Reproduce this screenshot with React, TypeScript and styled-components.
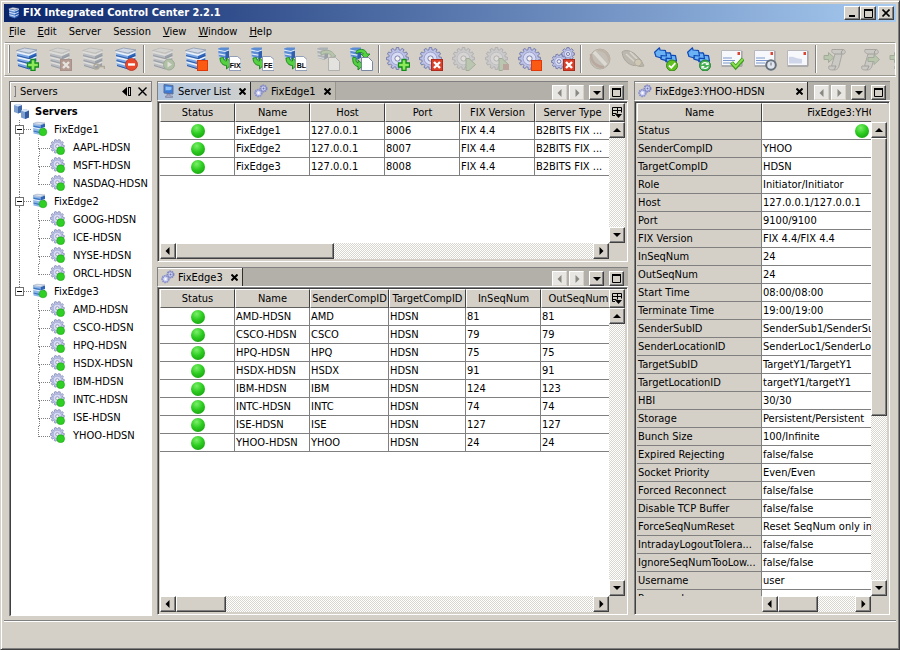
import React from 'react';
import styled, { createGlobalStyle, css } from 'styled-components';

const face = '#d4d0c8';

const GlobalStyle = createGlobalStyle`
  * { box-sizing: border-box; }
  body { margin: 0; background: ${face}; overflow: hidden; }
  body, button, table {
    font-family: "DejaVu Sans Condensed", "DejaVu Sans", sans-serif;
    font-size: 11px;
    color: #000;
  }
  button { padding: 0; margin: 0; border: 0; background: none; }
  svg { display: block; flex: none; }
`;

const raised = css`
  background: ${face};
  border: 1px solid;
  border-color: #fff #404040 #404040 #fff;
  box-shadow: inset -1px -1px #808080;
`;

/* ---------- window ---------- */

const Window = styled.div`
  height: 100vh;
  display: flex;
  flex-direction: column;
  padding: 3px;
  background: ${face};
  border: 1px solid;
  border-color: ${face} #404040 #404040 ${face};
  box-shadow: inset 1px 1px #fff, inset -1px -1px #808080;
`;

const TitleBar = styled.header`
  display: flex;
  align-items: center;
  flex: none;
  height: 18px;
  padding: 0 2px 0 4px;
  background: linear-gradient(to right, #0a246a, #a6caf0);
`;

const Title = styled.h1`
  flex: 1;
  margin: 0 0 0 3px;
  font-size: 11px;
  line-height: 18px;
  font-weight: bold;
  color: #fff;
  white-space: nowrap;
`;

const CaptionButton = styled.button<{ $apart?: boolean }>`
  ${raised}
  display: flex;
  align-items: center;
  justify-content: center;
  width: 16px;
  height: 14px;
  margin-left: ${p => (p.$apart ? 2 : 0)}px;
`;

const MenuBar = styled.nav`
  display: flex;
  flex: none;
  gap: 12px;
  height: 20px;
  padding-left: 5px;
`;

const MenuItem = styled.button`
  line-height: 20px;
`;

const ToolBar = styled.div`
  display: flex;
  align-items: center;
  flex: none;
  height: 34px;
  padding-left: 3px;
  overflow: hidden;
  border: 1px solid #9a978f;
  border-left-color: #fff;
  border-right-color: #fff;
  box-shadow: inset 0 1px #fff, 0 1px #fff;
`;

const Divider = styled.span`
  flex: none;
  width: 2px;
  height: 28px;
  margin: 0 1px;
  border-left: 1px solid #808080;
  border-right: 1px solid #fff;
`;

const Grip = styled.span`
  flex: none;
  width: 2px;
  height: 28px;
  border-left: 1px solid #fff;
  border-right: 1px solid #808080;
`;

const ToolButton = styled.button`
  display: flex;
  flex: none;
  align-items: center;
  justify-content: center;
  width: 33px;
  height: 30px;

  &:disabled svg {
    filter: grayscale(0.65);
    opacity: 0.42;
  }
`;

const Workspace = styled.main`
  display: flex;
  flex: 1;
  gap: 4px;
  min-height: 0;
  padding: 5px 5px 4px;
`;

const StatusBar = styled.footer`
  flex: none;
  height: 26px;
  border-top: 1px solid #808080;
  box-shadow: inset 0 1px #fff;
`;

/* ---------- docked panels ---------- */

const Sidebar = styled.aside`
  display: flex;
  flex-direction: column;
  flex: none;
  width: 143px;
`;

const SidebarHeader = styled.div`
  display: flex;
  align-items: center;
  gap: 7px;
  flex: none;
  height: 20px;
  padding: 0 4px;
  border: 1px solid #808080;
  border-bottom: 0;
  box-shadow: inset 1px 1px #fff;
`;

const SidebarGrip = styled.span`
  width: 2px;
  height: 11px;
  border: 1px solid #808080;
  border-left: 0;
`;

const SidebarTitle = styled.h2`
  flex: 1;
  margin: 0 0 0 -3px;
  font-size: 11px;
  font-weight: normal;
`;

const Center = styled.div`
  display: flex;
  flex-direction: column;
  flex: 473 1 0;
  gap: 4px;
  min-width: 0;
`;

const Panel = styled.section<{ $grow: number }>`
  display: flex;
  flex-direction: column;
  flex: ${p => p.$grow} 1 0;
  min-width: 0;
  min-height: 0;
  padding: 0 1px 1px;
`;

const TabStrip = styled.div`
  display: flex;
  align-items: stretch;
  flex: none;
  height: 20px;
  background: #b2b0a8;
  border-top: 1px solid #808080;
  border-left: 1px solid #808080;
  border-bottom: 1px solid #fff;
`;

const tabTone = {
  focused: 'linear-gradient(to right, #b4c8e0, #d0d0cc)',
  selected: face,
  idle: '#bebbb3',
};

const Tab = styled.div<{ $tone: keyof typeof tabTone; $wide?: boolean }>`
  display: flex;
  align-items: center;
  flex: none;
  width: ${p => (p.$wide ? '173px' : 'auto')};
  padding: 0 4px 0 3px;
  background: ${p => tabTone[p.$tone]};
  border-right: 1px solid ${p => (p.$tone === 'idle' ? '#99968e' : '#303030')};
  box-shadow: inset 0 1px ${p => (p.$tone === 'idle' ? '#bebbb3' : '#fff')};
`;

const TabLabel = styled.button`
  display: flex;
  align-items: center;
  flex: 1;
  gap: 3px;
  height: 18px;
  white-space: nowrap;
`;

const TabClose = styled.button`
  display: flex;
  margin-left: 8px;
  padding: 1px 0 0;
`;

const StripTools = styled.div`
  display: flex;
  align-items: center;
  margin-left: auto;
  padding: 3px 4px 0 0;
`;

const StripButton = styled.button<{ $space: number }>`
  ${raised}
  display: flex;
  align-items: center;
  justify-content: center;
  width: 15px;
  height: 15px;
  margin-left: ${p => p.$space}px;

  &:disabled {
    background: #e8e6e2;
    border-color: #fff #d4d0c8 #d4d0c8 #fff;
    box-shadow: none;
  }
`;

const PanelBody = styled.div`
  display: grid;
  grid-template-columns: minmax(0, 1fr) 16px;
  grid-template-rows: 19px minmax(0, 1fr) 16px;
  flex: 1;
  min-height: 0;
  padding: 1px 2px 2px;
  border: 1px solid;
  border-color: #808080 #fff #fff #808080;
  box-shadow: inset 1px 1px #404040;
`;

const Viewport = styled.div<{ $plain?: boolean }>`
  grid-row: 1 / 3;
  grid-column: 1;
  overflow: hidden;
  background: ${p => (p.$plain ? face : '#fff')};
`;

const Corner = styled.button`
  ${raised}
  display: flex;
  align-items: center;
  justify-content: center;
`;

const CornerGap = styled.span`
  background: ${face};
  border-top: 1px solid #fff;
`;

/* ---------- scroll bars ---------- */

const ScrollTrack = styled.div<{ $vertical?: boolean; $inset?: number }>`
  display: flex;
  flex-direction: ${p => (p.$vertical ? 'column' : 'row')};
  grid-column: ${p => (p.$vertical ? 2 : 1)};
  grid-row: ${p => (p.$vertical ? 2 : 3)};
  margin-left: ${p => p.$inset ?? 0}px;
  background: repeating-conic-gradient(#fff 0 25%, #d9d6cf 0 50%) 0 0 / 2px 2px;
`;

const ScrollButton = styled.button`
  ${raised}
  display: flex;
  align-items: center;
  justify-content: center;
  flex: none;
  width: 16px;
  height: 16px;
`;

const ScrollLane = styled.div<{ $vertical?: boolean }>`
  display: flex;
  flex-direction: ${p => (p.$vertical ? 'column' : 'row')};
  flex: 1;
  min-width: 0;
  min-height: 0;
`;

const ScrollThumb = styled.div<{ $size: number }>`
  ${raised}
  flex: 0 0 ${p => p.$size}%;
`;

/* ---------- tables ---------- */

const Grid = styled.table`
  table-layout: fixed;
  width: 0;
  border-collapse: separate;
  border-spacing: 0;
`;

const HeadCell = styled.th`
  height: 19px;
  padding: 0;
  line-height: 16px;
  font-weight: normal;
  text-align: center;
  white-space: nowrap;
  overflow: hidden;
  background: ${face};
  border: 1px solid;
  border-color: #fff #404040 #606060 #fff;
`;

const Cell = styled.td<{ $plain?: boolean }>`
  height: 18px;
  padding: 0 0 0 1px;
  line-height: 17px;
  text-align: left;
  white-space: nowrap;
  overflow: hidden;
  background: ${p => (p.$plain ? face : '#fff')};
  border-right: 1px solid #808080;
  border-bottom: 1px solid #808080;
`;

const NameCell = styled(Cell).attrs({ as: 'th', scope: 'row' })`
  font-weight: normal;
`;

const Ball = styled.span`
  display: block;
  width: 14px;
  height: 14px;
  margin: 0 auto;
  border-radius: 50%;
  background: radial-gradient(circle at 40% 28%, #7cf06a, #2ccc20 45%, #13960e 95%);
`;

/* ---------- tree ---------- */

const Tree = styled.div`
  flex: 1;
  min-height: 0;
  overflow: hidden;
  padding: 0 1px;
  background: #fff;
  border: 1px solid;
  border-color: #404040 #fff #fff #404040;
  box-shadow: -1px 0 #808080;
  margin-left: 1px;
`;

const RootRow = styled.div`
  display: flex;
  align-items: center;
  gap: 6px;
  height: 18px;
  padding-left: 2px;
  font-weight: bold;
`;

const Branches = styled.ul`
  margin: 0;
  padding: 0 0 0 3px;
  list-style: none;
`;

const BranchRow = styled.div`
  display: flex;
  align-items: center;
  height: 18px;
  white-space: nowrap;
`;

const Knot = styled.span<{ $last?: boolean }>`
  display: flex;
  flex-direction: column;
  align-items: center;
  flex: none;
  width: 9px;

  &::before, &::after {
    content: '';
    height: 5px;
    border-left: 1px dotted #808080;
  }
  &::after {
    height: 4px;
    border-color: ${p => (p.$last ? 'transparent' : '#808080')};
  }
`;

const Toggle = styled.button`
  display: flex;
  align-items: center;
  justify-content: center;
  width: 9px;
  height: 9px;
  background: #fff;
  border: 1px solid #707070;
`;

const Stub = styled.span`
  flex: none;
  width: 7px;
  margin-right: 1px;
  border-top: 1px dotted #808080;
`;

const BranchName = styled.span`
  margin-left: 6px;
`;

const Leaves = styled.ul<{ $last?: boolean }>`
  margin: 0 0 0 4px;
  padding: 0 0 0 18px;
  list-style: none;
  border-left: 1px dotted ${p => (p.$last ? 'transparent' : '#808080')};
`;

const Leaf = styled.li`
  display: flex;
  align-items: center;
  height: 18px;
  white-space: nowrap;

  &::before {
    content: '';
    align-self: flex-start;
    flex: none;
    width: 11px;
    height: 10px;
    border-left: 1px dotted #808080;
    border-bottom: 1px dotted #808080;
  }
`;

const LeafStem = styled.span`
  align-self: flex-end;
  flex: none;
  width: 11px;
  height: 8px;
  margin-left: -11px;
  border-left: 1px dotted #808080;
`;

const LeafName = styled.span`
  margin-left: 7px;
`;

/* ---------- drawings ---------- */

function gearPath(cx: number, cy: number, r: number, teeth = 10): string {
  const pts: string[] = [];
  const step = (Math.PI * 2) / teeth;
  for (let i = 0; i < teeth; i++) {
    const a = i * step;
    [[-0.32, 0.8], [-0.22, 1], [0.22, 1], [0.32, 0.8]].forEach(([o, k]) => {
      const t = a + o * step;
      pts.push(`${(cx + Math.cos(t) * r * k).toFixed(2)} ${(cy + Math.sin(t) * r * k).toFixed(2)}`);
    });
  }
  return `M${pts.join('L')}Z`;
}

const Gear = ({ x, y, r, teeth = 10 }: { x: number; y: number; r: number; teeth?: number }) => (
  <g>
    <path d={gearPath(x, y, r, teeth)} fill="#bcc2e6" stroke="#7278a8" strokeWidth={0.9} strokeLinejoin="round" />
    <circle cx={x} cy={y} r={r * 0.58} fill="#d8dcf4" stroke="#989ecb" strokeWidth={0.9} />
    <circle cx={x} cy={y} r={r * 0.24} fill="#f4f3f0" stroke="#6f76a8" strokeWidth={0.9} />
  </g>
);

const Server = () => (
  <g>
    <path d="M2 4.500 14 7V22.500L3 19Z" fill="#7ba6e4" />
    <path d="M14 7 21.500 4 21 18.500 14 22.500Z" fill="#2f66c0" />
    <path d="M1.500 3.500 9.500 1 22 3 14 6.200Z" fill="#d3dae6" stroke="#7f90ac" strokeWidth=".7" />
    <path d="M1.800 5.200 14 8 21.700 4.800M2.200 10.300 14 13.200 21.500 10M2.600 15.200 14 18.300 21.200 15" fill="none" stroke="#e8f0fa" strokeWidth="1.700" />
    <path d="M2 8.500 14 11.500 21.500 8.300M2.500 13.500 14 16.600 21.300 13.300M3 18.500 14 21.900 21 18.200" fill="none" stroke="#24509c" strokeWidth=".9" />
  </g>
);

const Plus = () => <path d="M16 12.500h4v3.500h3.500v4H20v3.500h-4V20h-3.500v-4H16Z" fill="#8eea5a" stroke="#128a1c" strokeWidth="1.300" />;
const Cross = () => (
  <g>
    <rect x="12.500" y="12.500" width="11" height="11" fill="#d9402a" stroke="#b02a1c" />
    <path d="m15 15 6 6m0-6-6 6" stroke="#fff" strokeWidth="2.400" />
  </g>
);
const Minus = () => (
  <g>
    <circle cx="17.500" cy="17.500" r="6" fill="#e8492c" stroke="#b8301c" strokeWidth=".8" />
    <path d="M14 17.500h7" stroke="#fff" strokeWidth="2.400" />
  </g>
);
const Stop = () => <rect x="13.500" y="13.500" width="10" height="10" fill="#fa5a14" stroke="#e03808" />;
const Play = () => (
  <g>
    <circle cx="18" cy="17.500" r="5.500" fill="#48c034" stroke="#248a20" />
    <path d="M16.500 14.500 21 17.500 16.500 20.500Z" fill="#e4ffd8" />
  </g>
);
const PlayFlat = () => <path d="M14 11.500h3l6.500 6-6.500 6h-3Z" fill="#6ccc50" stroke="#2c8f28" />;
const Link = () => (
  <g fill="none" stroke="#8a7430" strokeWidth="1.600">
    <circle cx="15.500" cy="19.500" r="2.500" /><path d="M18 19.500h5.500v2.500" />
  </g>
);
const Arrow = () => <path d="M3 11c0 5 3 7.500 6.500 7.500V22l6-5.500-6-5.500v3C8 14 6.500 13 6.500 10.500Z" fill="#55d040" stroke="#17801a" strokeWidth=".9" />;
const Sheet = () => <path d="M12.500 10.500h7l4 4v9h-11Z" fill="#fbfdff" stroke="#6c7c98" strokeWidth=".9" />;
const Cylinder = () => (
  <g>
    <path d="M1 1.500 4 .5h8v10L8 13 2 11Z" fill="#5c8cd4" />
    <path d="M1 3.200 8 4.500 12 3M1.500 6.800 8 8.200 12 6.500M2 10 8 11.500" fill="none" stroke="#dce9f8" strokeWidth="1.200" />
    <path d="M8.500 5 12 3.800V10.500L8.500 12.600Z" fill="#2f5fae" />
  </g>
);

const ExportTo = ({ label }: { label: string }) => (
  <g>
    <Cylinder />
    <Arrow />
    <path d="M12.500 9.500h8l3.500 3v11H12.500Z" fill="#fff" stroke="#7c8cac" strokeWidth=".8" />
    <text x="18.300" y="20.500" textAnchor="middle" fontFamily="Liberation Sans, sans-serif" fontWeight="bold" fontSize="7">{label}</text>
  </g>
);

const DocumentCopy = () => (
  <g>
    <Cylinder />
    <path d="M5 4.500c7-3 12 0 13 3l2 1.500-5 2V8c-1-1.500-5-2-10 0Z" fill="#55d040" stroke="#17801a" strokeWidth=".8" />
    <Sheet />
  </g>
);

const DocumentSwap = () => (
  <g>
    <Cylinder />
    <path d="M7 4.500c5-4 10-2 11 2.500h3l-4.500 4.500L12 7h2.500c-1-2-4-2-7.500-.5Z" fill="#55d040" stroke="#17801a" strokeWidth=".8" />
    <path d="M4 10c-1 5 1 9 5 9.500V23l5.500-5-5.500-5v3c-2-.5-2.500-3-1.500-5Z" fill="#55d040" stroke="#17801a" strokeWidth=".9" />
    <Sheet />
  </g>
);

const TwinGears = () => (
  <g>
    <Gear x={17} y={7} r={6.5} teeth={8} />
    <Gear x={8} y={14.5} r={7.5} />
  </g>
);

const Plug = () => (
  <g>
    <path d="M1 5c4-3 9-1 13 2l6 6 3 6-4 .5-3-1c-5 1-14-3-15-13.500Z" fill="#a89878" stroke="#7c6c4c" />
    <path d="m5 7 9 8M9 5l8 8" stroke="#e4dcc8" strokeWidth="1.600" />
    <circle cx="17" cy="15.500" r="3.500" fill="#d8c060" stroke="#8c7830" />
  </g>
);
const NoPlug = () => (
  <g>
    <circle cx="12" cy="12" r="10" fill="#b8a888" stroke="#94845c" />
    <path d="m6 5 12 13" stroke="#efe8da" strokeWidth="3.500" />
    <path d="M3 7c0 8 5 13 13 13" fill="none" stroke="#cc6840" strokeWidth="2.500" />
    <path d="M10 3c7 0 11 5 11 11" fill="none" stroke="#cc8450" strokeWidth="2" />
  </g>
);

const Arrows = () => (
  <g fill="#6ab2f4" stroke="#0f48b4" strokeWidth="1.200" strokeLinejoin="round">
    {[2, 1, 0].map(i => (
      <path
        key={i}
        transform={`translate(${i * 5} ${i * 2.6})`}
        d="M.6 5.200 5.500 .8 6 3 11.500 3.500 12.500 9 7 8.500 7.300 11 2 9.500Z"
      />
    ))}
  </g>
);
const OkBadge = () => (
  <g>
    <circle cx="18" cy="18.500" r="5.500" fill="#5fc020" stroke="#38881a" />
    <path d="m15 18.500 2.300 2.300 4-4.600" fill="none" stroke="#fff" strokeWidth="1.800" />
  </g>
);
const SyncBadge = () => (
  <g>
    <circle cx="18" cy="18.500" r="5.500" fill="#45b054" stroke="#2a8438" />
    <path d="M14.800 17.500c1-2.300 4-2.600 5.500-.8m.8-1.500v2.300h-2.300m2.500 2c-1 2.300-4 2.600-5.500.8m-.8 1.500v-2.300h2.300" fill="none" stroke="#fff" strokeWidth="1.200" />
  </g>
);

const Letter = ({ blank }: { blank?: boolean }) => (
  <g>
    <path d="M1.500 3.500h20v15h-20Z" fill="#f7f8fb" stroke="#b8b8bc" />
    <path d="M1.500 19.200h20.500V4" fill="none" stroke="#9a9a9e" />
    <path d="M17.500 5h2.500v3h-2.500Z" fill="#dc4436" />
    {blank
      ? <path d="M3 10c5-1 7 2 13 2v4.500H3Z" fill="#d0d6ea" />
      : <path d="M3 11h9M3 13.500h12M3 16h9" stroke="#7c98cc" strokeWidth="1.100" />}
  </g>
);
const Tick = () => (
  <g fill="none">
    <path d="m11.500 15.500 4.200 4.800 7.500-8.500" stroke="#3f9a22" strokeWidth="4" />
    <path d="m11.800 15.800 3.900 4 7.200-8" stroke="#8ade4c" strokeWidth="2" />
  </g>
);
const Clock = () => (
  <g>
    <circle cx="18" cy="18" r="4.800" fill="#dfe6ee" stroke="#65707c" strokeWidth="2" />
    <path d="M18 15.500V18.500" fill="none" stroke="#667" />
  </g>
);

const Scroll = ({ right }: { right?: boolean }) => (
  <g>
    <path d="M9 2.500h11c3 0 3 5 0 4.500h-1l-3 12c-1 4-4 4-6 4-4 0-5-1-4-4h2.500L12 7C10 6 8 6 9 2.500Z" fill="#c0c0bc" stroke="#6c6c6c" />
    <path d="M20 3c-2 1-2 3-1 4H12M8.500 19H13c-1 1.500-1 3-2 4" fill="none" stroke="#5c5c5c" />
    {right
      ? <path d="M12 10.500h6V7.500l5.500 5-5.500 5v-3h-6Z" fill="#66cc4a" stroke="#348c28" />
      : <path d="M1 8.500h4.500V5.500l5.500 5-5.500 5v-3H1Z" fill="#66cc4a" stroke="#348c28" />}
  </g>
);

const Icon = ({ size = 24, children }: { size?: number; children: React.ReactNode }) => (
  <svg width={size} height={size} viewBox="0 0 24 24" aria-hidden="true">{children}</svg>
);

const SmallCross = ({ size = 7, weight = 2 }: { size?: number; weight?: number }) => (
  <svg width={size} height={size} viewBox={`0 0 ${size} ${size}`} aria-hidden="true">
    <path d={`M.5 .5 ${size - 0.5} ${size - 0.5}M${size - 0.5} .5 .5 ${size - 0.5}`} stroke="#000" strokeWidth={weight} />
  </svg>
);

const arrowShapes = {
  left: 'M5.500 0v8L1.500 4Z',
  right: 'M2.500 0v8L6.500 4Z',
  up: 'M0 6 4 2 8 6Z',
  down: 'M0 2 4 6 8 2Z',
};

const Triangle = ({ to, faded }: { to: keyof typeof arrowShapes; faded?: boolean }) => (
  <svg width="8" height="8" viewBox="0 0 8 8" aria-hidden="true">
    <path d={arrowShapes[to]} fill={faded ? '#8a8880' : '#000'} />
  </svg>
);

const MonitorIcon = () => (
  <svg width="14" height="14" viewBox="0 0 14 14" aria-hidden="true">
    <path d="M3 .5 12 1.500v8.500L3 9Z" fill="#3c7cd8" stroke="#5f6f94" />
    <path d="M4.500 2.500 10.500 3v2.500c-2 1.500-4 0-6 1Z" fill="#8cc0f8" />
    <path d="M6 10h3v2h2.500v1.500h-7V12H6Z" fill="#a4a8c4" stroke="#6c7090" strokeWidth=".5" />
  </svg>
);

const GearsTabIcon = () => (
  <svg width="14" height="14" viewBox="0 0 14 14" aria-hidden="true">
    <circle cx="9.500" cy="4.500" r="3" fill="#d6daf6" stroke="#8086c0" strokeWidth="2" strokeDasharray="1.600 .5" />
    <circle cx="9.500" cy="4.500" r="1" fill="#6c72ac" />
    <circle cx="4.500" cy="9" r="3.200" fill="#d6daf6" stroke="#8c92cc" strokeWidth="2" strokeDasharray="1.700 .5" />
    <circle cx="4.500" cy="9" r="1" fill="#fff" />
  </svg>
);

const MaximizeIcon = () => (
  <svg width="9" height="9" viewBox="0 0 9 9" aria-hidden="true">
    <path d="M.5 1v7.500h8V1M0 1h9" fill="none" stroke="#000" />
    <path d="M0 0h9v2H0Z" fill="#000" />
  </svg>
);

const ColumnsIcon = () => (
  <svg width="12" height="12" viewBox="0 0 12 12" aria-hidden="true">
    <path d="M1.500 8.500V.5h9v5M1.500 3.500h9M6.500 .5v6M1.500 6.500h4M1.500 8.500H4" fill="none" stroke="#000" />
    <path d="M4 7h7L7.500 11Z" fill="#000" />
  </svg>
);

const SmallServer = () => (
  <svg width="16" height="16" viewBox="0 0 16 16" aria-hidden="true">
    <path d="M1 3 8.500 4V14L1.500 12.500Z" fill="#8cb6ea" />
    <path d="M8.500 4 13 2.500V12L8.500 14Z" fill="#2e64b8" />
    <path d="M1 2.500 5 1.200 13 2 8.500 3.800Z" fill="#dbe5f2" stroke="#8496b4" strokeWidth=".5" />
    <path d="M1 6.500 8.500 8 13 6.500" fill="none" stroke="#eaf3fc" />
    <path d="M1.500 5.200 8.500 6.600M1.500 10 8.500 11.600" stroke="#3f74c0" strokeWidth="1.200" />
    <circle cx="11" cy="11" r="3.800" fill="#2fcf24" stroke="#1fa81a" strokeWidth=".6" />
  </svg>
);

const SmallGear = () => (
  <Icon size={16}>
    <Gear x={11} y={11} r={10.5} />
    <circle cx="16" cy="17.500" r="5.800" fill="#2fcf24" stroke="#1fa81a" />
  </Icon>
);

const ServersIcon = () => (
  <svg width="15" height="15" viewBox="0 0 15 15" aria-hidden="true">
    <path d="M0 1 4 0l4 1v7l-4 1.500L0 8Z" fill="#7c9fd0" />
    <path d="M4 2.500 8 1v7l-4 1.500Z" fill="#3f68a8" />
    <path d="M0 1 4 0l4 1-4 1.500Z" fill="#d8e6f6" />
    <path d="M7 6.500 11 5l4 1.500v7L11 15l-4-1.500Z" fill="#7c9fd0" />
    <path d="M11 8l4-1.500v7L11 15Z" fill="#345c9e" />
    <path d="M7 6.500 11 5l4 1.500L11 8Z" fill="#d8e6f6" />
  </svg>
);

/* ---------- data ---------- */

type Tool = { name: string; off?: boolean; art: React.ReactNode };

const bigGear = <Gear x={11.5} y={11.5} r={11} teeth={12} />;

const toolGroups: Tool[][] = [
  [
    { name: 'Add server', art: <><Server /><Plus /></> },
    { name: 'Delete server', off: true, art: <><Server /><Cross /></> },
    { name: 'Connect server', off: true, art: <><Server /><Link /></> },
    { name: 'Disconnect server', art: <><Server /><Minus /></> },
  ],
  [
    { name: 'Start server', off: true, art: <><Server /><Play /></> },
    { name: 'Stop server', art: <><Server /><Stop /></> },
    { name: 'Export FIX', art: <ExportTo label="FIX" /> },
    { name: 'Export FE', art: <ExportTo label="FE" /> },
    { name: 'Export BL', art: <ExportTo label="BL" /> },
    { name: 'Copy file', off: true, art: <DocumentCopy /> },
    { name: 'Reload file', art: <DocumentSwap /> },
  ],
  [
    { name: 'Add session', art: <>{bigGear}<Plus /></> },
    { name: 'Delete session', art: <>{bigGear}<Cross /></> },
    { name: 'Start session', off: true, art: <>{bigGear}<PlayFlat /></> },
    { name: 'Restart session', off: true, art: <>{bigGear}<PlayFlat /><path d="M18 17h6v6h-6Z" fill="#e0563a" /></> },
    { name: 'Stop session', art: <>{bigGear}<Stop /></> },
    { name: 'Delete all sessions', art: <><TwinGears /><Cross /></> },
  ],
  [
    { name: 'Unplug', off: true, art: <NoPlug /> },
    { name: 'Plug', off: true, art: <Plug /> },
    { name: 'Apply sequence', art: <><Arrows /><OkBadge /></> },
    { name: 'Reset sequence', art: <><Arrows /><SyncBadge /></> },
    { name: 'Send message', art: <><Letter /><Tick /></> },
    { name: 'Delay message', art: <><Letter /><Clock /></> },
    { name: 'New message', art: <Letter blank /> },
  ],
  [
    { name: 'Import log', off: true, art: <Scroll /> },
    { name: 'Export log', off: true, art: <Scroll right /> },
    { name: 'Open log', off: true, art: <Scroll /> },
  ],
];

const menus = ['File', 'Edit', 'Server', 'Session', 'View', 'Window', 'Help'];
const menusWithoutKey = ['Server', 'Session'];

const branches = [
  { name: 'FixEdge1', leaves: ['AAPL-HDSN', 'MSFT-HDSN', 'NASDAQ-HDSN'] },
  { name: 'FixEdge2', leaves: ['GOOG-HDSN', 'ICE-HDSN', 'NYSE-HDSN', 'ORCL-HDSN'] },
  {
    name: 'FixEdge3',
    leaves: ['AMD-HDSN', 'CSCO-HDSN', 'HPQ-HDSN', 'HSDX-HDSN', 'IBM-HDSN', 'INTC-HDSN', 'ISE-HDSN', 'YHOO-HDSN'],
  },
];

type Column = { title: string; width: number };

const serverColumns: Column[] = ['Status', 'Name', 'Host', 'Port', 'FIX Version', 'Server Type']
  .map(title => ({ title, width: 75 }));

const serverRows = [
  ['FixEdge1', '127.0.0.1', '8006', 'FIX 4.4', 'B2BITS FIX ...'],
  ['FixEdge2', '127.0.0.1', '8007', 'FIX 4.4', 'B2BITS FIX ...'],
  ['FixEdge3', '127.0.0.1', '8008', 'FIX 4.4', 'B2BITS FIX ...'],
];

const sessionColumns: Column[] = [
  { title: 'Status', width: 75 },
  { title: 'Name', width: 75 },
  { title: 'SenderCompID', width: 79 },
  { title: 'TargetCompID', width: 77 },
  { title: 'InSeqNum', width: 75 },
  { title: 'OutSeqNum', width: 75 },
];

const sessionRows = [
  ['AMD-HDSN', 'AMD', 'HDSN', '81', '81'],
  ['CSCO-HDSN', 'CSCO', 'HDSN', '79', '79'],
  ['HPQ-HDSN', 'HPQ', 'HDSN', '75', '75'],
  ['HSDX-HDSN', 'HSDX', 'HDSN', '91', '91'],
  ['IBM-HDSN', 'IBM', 'HDSN', '124', '123'],
  ['INTC-HDSN', 'INTC', 'HDSN', '74', '74'],
  ['ISE-HDSN', 'ISE', 'HDSN', '127', '127'],
  ['YHOO-HDSN', 'YHOO', 'HDSN', '24', '24'],
];

const propertyRows = [
  ['Status', ''],
  ['SenderCompID', 'YHOO'],
  ['TargetCompID', 'HDSN'],
  ['Role', 'Initiator/Initiator'],
  ['Host', '127.0.0.1/127.0.0.1'],
  ['Port', '9100/9100'],
  ['FIX Version', 'FIX 4.4/FIX 4.4'],
  ['InSeqNum', '24'],
  ['OutSeqNum', '24'],
  ['Start Time', '08:00/08:00'],
  ['Terminate Time', '19:00/19:00'],
  ['SenderSubID', 'SenderSub1/SenderSub1'],
  ['SenderLocationID', 'SenderLoc1/SenderLoc1'],
  ['TargetSubID', 'TargetY1/TargetY1'],
  ['TargetLocationID', 'targetY1/targetY1'],
  ['HBI', '30/30'],
  ['Storage', 'Persistent/Persistent'],
  ['Bunch Size', '100/Infinite'],
  ['Expired Rejecting', 'false/false'],
  ['Socket Priority', 'Even/Even'],
  ['Forced Reconnect', 'false/false'],
  ['Disable TCP Buffer', 'false/false'],
  ['ForceSeqNumReset', 'Reset SeqNum only in IN'],
  ['IntradayLogoutTolera...', 'false/false'],
  ['IgnoreSeqNumTooLow...', 'false/false'],
  ['Username', 'user'],
  ['Password', ''],
];

/* ---------- composed parts ---------- */

type ScrollBarProps = { vertical?: boolean; thumb?: number; inset?: number };

const ScrollBar = ({ vertical, thumb, inset }: ScrollBarProps) => (
  <ScrollTrack $vertical={vertical} $inset={inset}>
    <ScrollButton aria-label={vertical ? 'Scroll up' : 'Scroll left'}>
      <Triangle to={vertical ? 'up' : 'left'} />
    </ScrollButton>
    <ScrollLane $vertical={vertical}>{thumb ? <ScrollThumb $size={thumb} /> : null}</ScrollLane>
    <ScrollButton aria-label={vertical ? 'Scroll down' : 'Scroll right'}>
      <Triangle to={vertical ? 'down' : 'right'} />
    </ScrollButton>
  </ScrollTrack>
);

const CloseTab = ({ name }: { name: string }) => (
  <TabClose aria-label={`Close ${name}`}><SmallCross /></TabClose>
);

const StripControls = () => (
  <StripTools>
    <StripButton $space={0} disabled aria-label="Previous tab"><Triangle to="left" faded /></StripButton>
    <StripButton $space={2} disabled aria-label="Next tab"><Triangle to="right" faded /></StripButton>
    <StripButton $space={5} aria-label="List tabs"><Triangle to="down" /></StripButton>
    <StripButton $space={5} aria-label="Maximize panel"><MaximizeIcon /></StripButton>
  </StripTools>
);

const Columns = ({ columns }: { columns: Column[] }) => (
  <>
    <colgroup>{columns.map(c => <col key={c.title} width={c.width} />)}</colgroup>
    <thead>
      <tr>{columns.map(c => <HeadCell key={c.title} scope="col">{c.title}</HeadCell>)}</tr>
    </thead>
  </>
);

const StatusTable = ({ columns, rows }: { columns: Column[]; rows: string[][] }) => (
  <Grid>
    <Columns columns={columns} />
    <tbody>
      {rows.map(row => (
        <tr key={row[0]}>
          <Cell><Ball role="img" aria-label="Running" /></Cell>
          {row.map((value, i) => <Cell key={i}>{value}</Cell>)}
        </tr>
      ))}
    </tbody>
  </Grid>
);

export default function App() {
  return (
    <>
      <GlobalStyle />
      <Window>
        <TitleBar>
          <Icon size={12}><Server /></Icon>
          <Title>FIX Integrated Control Center 2.2.1</Title>
          <CaptionButton aria-label="Minimize">
            <svg width="9" height="8" viewBox="0 0 9 8"><path d="M1 6h6v2H1Z" /></svg>
          </CaptionButton>
          <CaptionButton aria-label="Maximize"><MaximizeIcon /></CaptionButton>
          <CaptionButton $apart aria-label="Close"><SmallCross size={8} weight={1.6} /></CaptionButton>
        </TitleBar>

        <MenuBar>
          {menus.map(name => (
            <MenuItem key={name}>
              {menusWithoutKey.includes(name) ? name : <><u>{name[0]}</u>{name.slice(1)}</>}
            </MenuItem>
          ))}
        </MenuBar>

        <ToolBar role="toolbar">
          <Grip />
          {toolGroups.map((group, i) => (
            <React.Fragment key={i}>
              {i > 0 && <Divider />}
              {group.map(tool => (
                <ToolButton key={tool.name} disabled={tool.off} aria-label={tool.name}>
                  <Icon>{tool.art}</Icon>
                </ToolButton>
              ))}
            </React.Fragment>
          ))}
        </ToolBar>

        <Workspace>
          <Sidebar>
            <SidebarHeader>
              <SidebarGrip />
              <SidebarTitle>Servers</SidebarTitle>
              <button aria-label="Auto hide">
                <svg width="9" height="9" viewBox="0 0 9 9"><path d="M5 0v9L0 4.500ZM6 0h3v9H6Z" /><path d="M7 1h1v7H7Z" fill={face} /></svg>
              </button>
              <button aria-label="Close Servers"><SmallCross size={9} weight={1.4} /></button>
            </SidebarHeader>
            <Tree>
              <RootRow><ServersIcon />Servers</RootRow>
              <Branches>
                {branches.map((branch, b) => {
                  const last = b === branches.length - 1;
                  return (
                    <li key={branch.name}>
                      <BranchRow>
                        <Knot $last={last}>
                          <Toggle aria-label={`Collapse ${branch.name}`}>
                            <svg width="5" height="1" viewBox="0 0 5 1"><path d="M0 0h5v1H0Z" /></svg>
                          </Toggle>
                        </Knot>
                        <Stub />
                        <SmallServer />
                        <BranchName>{branch.name}</BranchName>
                      </BranchRow>
                      <Leaves $last={last}>
                        {branch.leaves.map((leaf, i) => (
                          <Leaf key={leaf}>
                            {i < branch.leaves.length - 1 && <LeafStem />}
                            <SmallGear />
                            <LeafName>{leaf}</LeafName>
                          </Leaf>
                        ))}
                      </Leaves>
                    </li>
                  );
                })}
              </Branches>
            </Tree>
          </Sidebar>

          <Center>
            <Panel $grow={182}>
              <TabStrip>
                <Tab $tone="focused">
                  <TabLabel><MonitorIcon />Server List</TabLabel>
                  <CloseTab name="Server List" />
                </Tab>
                <Tab $tone="idle">
                  <TabLabel><GearsTabIcon />FixEdge1</TabLabel>
                  <CloseTab name="FixEdge1" />
                </Tab>
                <StripControls />
              </TabStrip>
              <PanelBody>
                <Viewport><StatusTable columns={serverColumns} rows={serverRows} /></Viewport>
                <Corner aria-label="Choose server columns"><ColumnsIcon /></Corner>
                <ScrollBar vertical />
                <ScrollBar thumb={38} />
              </PanelBody>
            </Panel>

            <Panel $grow={349}>
              <TabStrip>
                <Tab $tone="selected">
                  <TabLabel><GearsTabIcon />FixEdge3</TabLabel>
                  <CloseTab name="FixEdge3" />
                </Tab>
                <StripControls />
              </TabStrip>
              <PanelBody>
                <Viewport><StatusTable columns={sessionColumns} rows={sessionRows} /></Viewport>
                <Corner aria-label="Choose session columns"><ColumnsIcon /></Corner>
                <ScrollBar vertical />
                <ScrollBar thumb={12} />
              </PanelBody>
            </Panel>
          </Center>

          <Panel $grow={256}>
            <TabStrip>
              <Tab $tone="selected" $wide>
                <TabLabel><GearsTabIcon />FixEdge3:YHOO-HDSN</TabLabel>
                <CloseTab name="FixEdge3:YHOO-HDSN" />
              </Tab>
              <StripControls />
            </TabStrip>
            <PanelBody>
              <Viewport $plain>
                <Grid>
                  <Columns columns={[{ title: 'Name', width: 125 }, { title: 'FixEdge3:YHOO-HDSN', width: 200 }]} />
                  <tbody>
                    {propertyRows.map(([name, value]) => (
                      <tr key={name}>
                        <NameCell $plain>{name}</NameCell>
                        <Cell>{name === 'Status' ? <Ball role="img" aria-label="Running" /> : value}</Cell>
                      </tr>
                    ))}
                  </tbody>
                </Grid>
              </Viewport>
              <CornerGap />
              <ScrollBar vertical thumb={63} />
              <ScrollBar thumb={52} inset={125} />
            </PanelBody>
          </Panel>
        </Workspace>

        <StatusBar />
      </Window>
    </>
  );
}
